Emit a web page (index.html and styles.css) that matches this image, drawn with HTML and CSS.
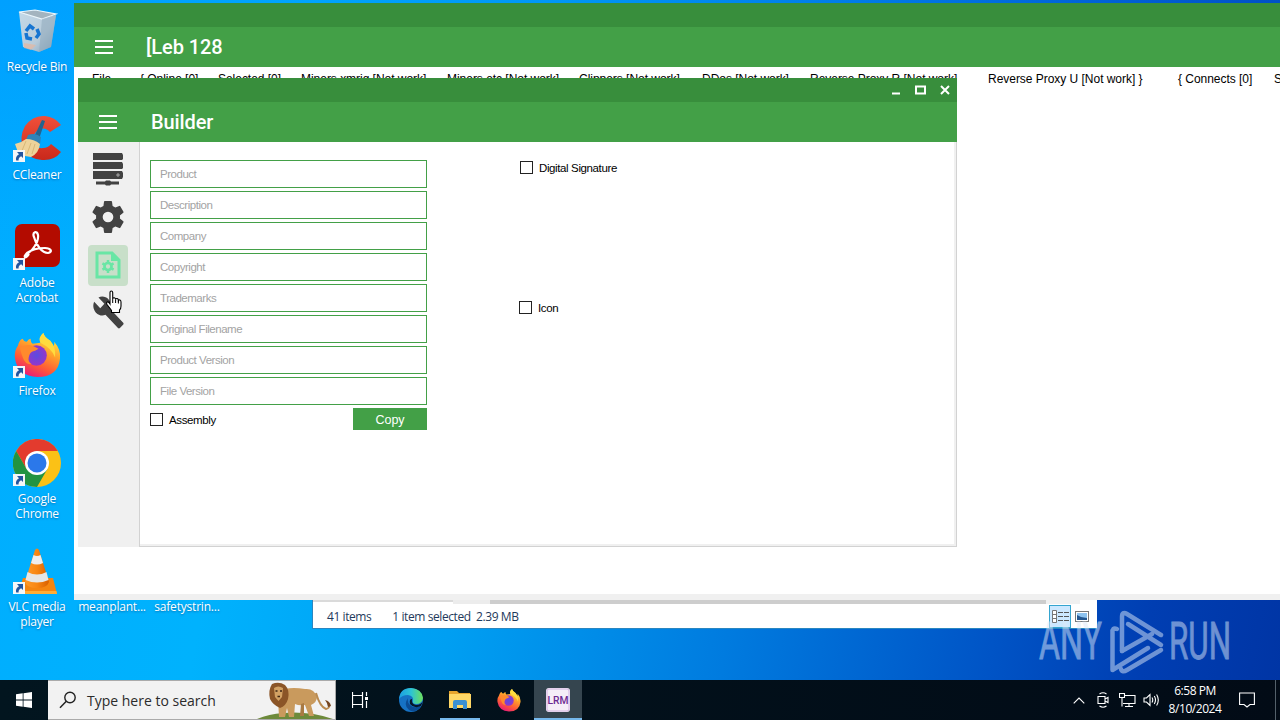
FILE: index.html
```
<!DOCTYPE html>
<html lang="en">
<head>
  <meta charset="UTF-8" />
  <meta name="viewport" content="width=device-width, initial-scale=1.0" />
  <title>Desktop</title>
  <link rel="stylesheet" href="styles.css">
</head>
<body>
  <!-- Shared icons -->
  <svg class="defs" width="0" height="0">
    <defs>
      <linearGradient id="fox-body" x1="0.8" y1="0" x2="0.3" y2="1">
        <stop offset="0" stop-color="#fff44f" />
        <stop offset="0.4" stop-color="#ffa12b" />
        <stop offset="0.7" stop-color="#ff5b36" />
        <stop offset="1" stop-color="#e8187c" />
      </linearGradient>
      <radialGradient id="fox-globe">
        <stop offset="0" stop-color="#5b4be0" />
        <stop offset="1" stop-color="#9436c9" />
      </radialGradient>
      <linearGradient id="bin-side" x1="0" y1="0" x2="1" y2="1">
        <stop offset="0" stop-color="#c3d9e8" />
        <stop offset="0.6" stop-color="#b8cbd9" />
        <stop offset="1" stop-color="#7d9cb5" />
      </linearGradient>
      <linearGradient id="cc-red" x1="0" y1="0" x2="0" y2="1">
        <stop offset="0" stop-color="#f0503a" />
        <stop offset="1" stop-color="#c9281b" />
      </linearGradient>
      <linearGradient id="cone" x1="0" y1="0" x2="1" y2="0">
        <stop offset="0" stop-color="#ff9a2a" />
        <stop offset="0.5" stop-color="#f88612" />
        <stop offset="1" stop-color="#d85f00" />
      </linearGradient>
      <linearGradient id="edge-top" x1="0" y1="0" x2="1" y2="0">
        <stop offset="0" stop-color="#1b9de2" />
        <stop offset="0.5" stop-color="#2cc3d5" />
        <stop offset="1" stop-color="#6fe05a" />
      </linearGradient>
    </defs>
    <symbol id="shortcut" viewBox="0 0 12 12">
      <rect width="12" height="12" fill="#f4f6f8" />
      <path d="M4 2h6v6L8.2 6.3Q5.3 7.5 5.6 10.5H3.2Q2 6.500 6 4.200z" fill="#23559f" />
    </symbol>
    <symbol id="firefox" viewBox="0 0 48 48">
      <path d="M4 15Q6 8 9 8Q10 11 13 11Q15 8 17 8Q17 12 19 13L27 12Q25 6 30 2Q31 6 37 10Q39 13 40 16Q42 14 41 11Q48 19 47 28Q45 47 24 47Q4 46 1 28Q0 20 4 15z" fill="url(#fox-body)" />
      <circle cx="23" cy="25" r="10.500" fill="url(#fox-globe)" />
      <path d="M6 17Q12 13 19 15L25 18Q22 20 19 21Q16 22 15 27Q14 31 18 34Q11 34 9 27Q7 22 6 17z" fill="#ff8a2c" />
      <path d="M27 12Q24 7 30 2Q31 7 37 10Q43 16 42 27Q39 18 27 12z" fill="#ffdc3e" />
    </symbol>
    <symbol id="menu" viewBox="0 0 18 14">
      <path d="M0 1h18M0 7h18M0 13h18" stroke="#fff" stroke-width="2" />
    </symbol>
  </svg>

  <div class="desktop">
    <div class="desktop-icons">
      <div class="desktop-item">
        <svg class="item-icon" viewBox="0 0 48 48">
          <path d="M6 5L10 40L26 45L38 40L43 8L29 11z" fill="url(#bin-side)" />
          <path d="M6 5L22 3L43 7L29 12z" fill="#a3b4bf" stroke="#eaf5fb" stroke-width="1.200" />
          <path d="M29 12L26 45L38 40L43 8z" fill="#8fa9bb" opacity=".55" />
          <path d="M13 24l4-5 4 3M24 22l2 5-3 4M19 32l-5-1-1-5" fill="none" stroke="#1675d1" stroke-width="3.500" />
          <path d="M11 36l12 2-5 5-7-2z" fill="#e6b6a0" opacity=".7" />
        </svg>
        <span>Recycle Bin</span>
      </div>
      <div class="desktop-item">
        <svg class="item-icon" viewBox="0 0 48 48">
          <path d="M48 10L37 17Q32 11 25 15Q19 20 20 27Q23 34 30 33Q35 33 38 29L48 37Q41 46 29 45Q16 44 10 34Q6 22 12 11Q20 0 32 1Q42 2 48 10z" fill="url(#cc-red)" />
          <path d="M29 5l3 1-6 18-5-2z" fill="#23648f" />
          <path d="M15 20Q22 17 28 22L27 29Q19 27 13 25z" fill="#2f83b8" />
          <path d="M13 24Q21 24 27 29Q26 38 18 42L6 40L2 29Q8 28 13 24z" fill="#eed39a" />
          <path d="M13 26L8 38M18 28L14 39M22 29L19 39" stroke="#d9b877" fill="none" />
          <use href="#shortcut" x="0" y="35" width="12" height="12" />
        </svg>
        <span>CCleaner</span>
      </div>
      <div class="desktop-item">
        <svg class="item-icon" viewBox="0 0 48 48">
          <rect x="2" y="1" width="45" height="43" rx="7" fill="#b30b00" />
          <path d="M12 32C19 29 26 19 25 12C24 7 19 9 21 14C23 22 29 30 35 30C40 29 38 25 32 25C25 25 18 27 14 30C10 34 12 37 16 31" fill="none" stroke="#fff" stroke-width="2.200" />
          <use href="#shortcut" x="0" y="35" width="12" height="12" />
        </svg>
        <span>Adobe<br>Acrobat</span>
      </div>
      <div class="desktop-item">
        <svg class="item-icon" viewBox="0 0 48 48">
          <use href="#firefox" x="1" y="0" width="47" height="47" />
          <use href="#shortcut" x="0" y="35" width="12" height="12" />
        </svg>
        <span>Firefox</span>
      </div>
      <div class="desktop-item">
        <svg class="item-icon" viewBox="0 0 48 48">
          <circle cx="24" cy="24" r="24" fill="#fbc116" />
          <path d="M24 12H44.800A24 24 0 0 0 3.200 12L13.600 30z" fill="#e33b2e" />
          <path d="M3.200 12A24 24 0 0 0 24 48L34.400 30H13.600z" fill="#229342" />
          <circle cx="24" cy="24" r="12" fill="#fff" />
          <circle cx="24" cy="24" r="9.500" fill="#2b78ea" />
          <use href="#shortcut" x="0" y="35" width="12" height="12" />
        </svg>
        <span>Google<br>Chrome</span>
      </div>
      <div class="desktop-item">
        <svg class="item-icon" viewBox="0 0 48 48">
          <path d="M10 31H40L44 47H5z" fill="#f58510" />
          <path d="M5 44H43.500L44 47H5z" fill="#ffad35" />
          <path d="M22 3Q24 0 26 3L36 35Q34 41 24 41Q14 41 12 35z" fill="url(#cone)" />
          <path d="M20.500 8Q24 10 27.500 8L30 16Q24 19 18 16z" fill="#eee" />
          <path d="M14.500 25Q24 30 33.500 25L35.500 33Q24 38 12.500 33z" fill="#e6e6e6" />
          <use href="#shortcut" x="0" y="35" width="12" height="12" />
        </svg>
        <span>VLC media<br>player</span>
      </div>
      <div class="desktop-item file-item"><span>meanplant...</span></div>
      <div class="desktop-item file-item"><span>safetystrin...</span></div>
    </div>

    <!-- Explorer, mostly covered -->
    <div class="window explorer">
      <div class="explorer-scroll">
        <div class="scroll-left"></div>
        <div class="scroll-gap"></div>
        <div class="scroll-thumb"></div>
        <div class="scroll-end"></div>
      </div>
      <div class="explorer-status">
        <span>41 items</span>
        <span>1 item selected&nbsp; 2.39 MB</span>
        <div class="view-buttons">
          <div class="view-button active">
            <svg width="17" height="13" viewBox="0 0 17 13">
              <path d="M.5.500h4v12h-4zM.5 4.500h4M.5 8.500h4" fill="#fff" stroke="#777" />
              <path d="M6 2.500h5M12 2.500h5M6 6.500h5M12 6.500h5M6 10.500h5M12 10.500h5" stroke="#555" />
            </svg>
          </div>
          <div class="view-button">
            <svg width="14" height="11" viewBox="0 0 14 11">
              <rect x=".5" y=".5" width="13" height="10" fill="#fff" stroke="#777" />
              <rect x="2" y="2" width="10" height="7" fill="#8dc3f0" />
              <path d="M2 4l4 2 6 1v2H2z" fill="#23568f" />
            </svg>
          </div>
        </div>
      </div>
    </div>

    <svg class="watermark" viewBox="0 0 194 66">
      <text x="0" y="51" textLength="63" lengthAdjust="spacingAndGlyphs">ANY</text>
      <text x="130" y="51" textLength="62" lengthAdjust="spacingAndGlyphs">RUN</text>
      <g fill="none" stroke-width="4.500" stroke-linejoin="round" stroke-linecap="round">
        <path d="M78 21Q73 19 73.500 25V62L109 40" />
        <path d="M83 43V9Q83 3 88 6L122 27" />
        <path d="M83 43L113 26M89 16L122 37" />
        <path d="M82 61Q83 65 88 62L122 42" />
      </g>
    </svg>

    <!-- Main window -->
    <div class="window main-window">
      <div class="caption"></div>
      <div class="header">
        <svg class="menu-icon"><use href="#menu" /></svg>
        <h1 class="title">[Leb 128</h1>
      </div>
      <div class="menu-bar">
        <span>File</span>
        <span>{ Online [0]</span>
        <span>Selected [0]</span>
        <span>Miners xmrig [Not work]</span>
        <span>Miners etc [Not work]</span>
        <span>Clippers [Not work]</span>
        <span>DDos [Not work]</span>
        <span>Reverse Proxy R [Not work]</span>
        <span>Reverse Proxy U [Not work] }</span>
        <span>{ Connects [0]</span>
        <span>S</span>
      </div>
    </div>

    <!-- Builder window -->
    <div class="window builder">
      <div class="caption">
        <svg width="10" height="10" viewBox="0 0 10 10"><path d="M1 8.500h8" /></svg>
        <svg width="11" height="10" viewBox="0 0 11 10"><path d="M1 1.500h9v7H1z" /></svg>
        <svg width="10" height="10" viewBox="0 0 10 10"><path d="M1 1l8 8M9 1l-8 8" /></svg>
      </div>
      <div class="header">
        <svg class="menu-icon"><use href="#menu" /></svg>
        <h1 class="title">Builder</h1>
      </div>
      <div class="builder-body">
        <div class="sidebar">
          <div class="side-button">
            <svg width="32" height="34" viewBox="0 0 32 34">
              <path d="M1 1h29l1 2v4l-1 1H1zM1 10h29l1 2v4l-1 1H1zM1 19h29l1 2v4l-1 2H1z" />
              <path d="M4 29.500h9l1-1h4l1 1h8v3h-8l-1 1h-4l-1-1H4z" />
              <path d="M24 23h4M26 21v4" stroke="#ccc" stroke-width=".7" />
            </svg>
          </div>
          <div class="side-button">
            <svg width="40" height="40" viewBox="0 0 24 24">
              <path d="M19.140 12.940c.04-.3.060-.61.060-.94s-.02-.64-.07-.94l2.030-1.580a.49.490 0 0 0 .12-.61l-1.920-3.320a.49.490 0 0 0-.59-.22l-2.390.96a7 7 0 0 0-1.620-.94L14.400 2.810a.48.480 0 0 0-.48-.41h-3.840a.47.470 0 0 0-.47.410L9.250 5.350c-.59.240-1.130.57-1.620.94l-2.390-.96a.48.480 0 0 0-.59.220L2.740 8.870a.47.470 0 0 0 .12.610l2.030 1.580a6 6 0 0 0 0 1.880l-2.030 1.580a.49.490 0 0 0-.12.610l1.920 3.320c.12.220.37.290.59.220l2.390-.96c.5.380 1.030.7 1.620.94l.36 2.540c.05.240.24.410.48.410h3.840c.24 0 .44-.17.470-.41l.36-2.540c.59-.24 1.130-.56 1.620-.94l2.390.96c.22.080.47 0 .59-.22l1.920-3.320a.47.470 0 0 0-.12-.61zM12 15.200A3.200 3.200 0 1 1 12 8.800a3.200 3.200 0 0 1 0 6.400z" />
            </svg>
          </div>
          <div class="side-button active">
            <svg width="26" height="28" viewBox="0 0 26 28">
              <path d="M2 2H17L24 9V26H2z" fill="none" stroke="#69e6a5" stroke-width="3" />
              <path d="M16 2v8h8z" fill="#69e6a5" />
              <circle cx="13" cy="15.500" r="3.500" fill="none" stroke="#69e6a5" stroke-width="2.700" />
              <path d="M13 9v3M13 19v3M7.400 12.300l2.600 1.500M16 17.200l2.600 1.500M7.400 18.700l2.600-1.500M16 13.800l2.600-1.500" stroke="#69e6a5" stroke-width="2.500" />
            </svg>
          </div>
          <div class="side-button">
            <svg width="33" height="35" viewBox="0 0 24 24" preserveAspectRatio="none">
              <path d="M22.700 19l-9.100-9.100c.9-2.300.4-5-1.500-6.900-2-2-5-2.400-7.400-1.300L9 6 6 9 1.600 4.700C.4 7.100.9 10.100 2.900 12.100c1.900 1.900 4.600 2.400 6.900 1.500l9.100 9.100c.4.400 1 .4 1.400 0l2.300-2.300c.5-.4.5-1.100.1-1.400z" />
            </svg>
          </div>
        </div>
        <div class="builder-content">
          <div class="fields">
            <input type="text" placeholder="Product" />
            <input type="text" placeholder="Description" />
            <input type="text" placeholder="Company" />
            <input type="text" placeholder="Copyright" />
            <input type="text" placeholder="Trademarks" />
            <input type="text" placeholder="Original Filename" />
            <input type="text" placeholder="Product Version" />
            <input type="text" placeholder="File Version" />
            <div class="fields-footer">
              <label class="check assembly"><i class="box"></i>Assembly</label>
              <button class="copy-btn">Copy</button>
            </div>
          </div>
          <div class="options">
            <label class="check signature"><i class="box"></i>Digital Signature</label>
            <label class="check"><i class="box"></i>Icon</label>
          </div>
        </div>
      </div>
    </div>

    <svg class="cursor" width="18" height="24" viewBox="0 0 18 24">
      <path d="M5 14V2.500Q5 1 6.300 1T7.700 2.500V9Q8 7.500 9.300 7.800T10.600 9.500Q11 8.200 12.200 8.600T13.400 10.500Q14 9.500 15 10T16 12V16Q16 19 14.500 20V22.500H6.500V20.500L2 14.500Q1 12.500 2.300 12T5 14z" fill="#fff" stroke="#000" stroke-width="1.100" />
      <path d="M7.700 9v4M10.600 9.500v3.500M13.400 10.500v3" stroke="#000" />
    </svg>
  </div>

  <div class="taskbar">
    <div class="start">
      <svg width="16" height="16" viewBox="0 0 16 16">
        <path d="M0 2.300L6.700 1.300V7.600H0zM7.500 1.200L16 0V7.600H7.500zM0 8.400H6.700V14.700L0 13.700zM7.500 8.400H16V16L7.500 14.800z" fill="#fff" />
      </svg>
    </div>
    <div class="search">
      <svg width="18" height="18" viewBox="0 0 18 18">
        <circle cx="11" cy="6.500" r="5.200" fill="none" stroke="#222" stroke-width="1.400" />
        <path d="M7.300 10.300L1 16.800" stroke="#222" stroke-width="1.500" />
      </svg>
      <span>Type here to search</span>
      <svg class="lion" width="78" height="38" viewBox="0 0 78 38">
        <path d="M0 38Q12 33 26 32Q52 30 76 38z" fill="#6d8a3b" />
        <path d="M28 8Q36 6 48 8Q57 7 60 16Q60 21 54 24L57 35H52L48 24Q42 25 38 23L37 36H32L30 27L28 36H22L21 18z" fill="#c99a5d" />
        <path d="M47 22L47 35H43L44 23z" fill="#a97a43" />
        <path d="M59 12Q63 26 69 28Q73 27 72 24" fill="none" stroke="#b98a50" stroke-width="2" />
        <path d="M71 26Q70 21 68 19Q73 20 74 25z" fill="#75451f" />
        <path d="M15 3Q22 0 28 4Q33 9 31 18Q29 25 23 27Q16 24 13 18Q11 9 15 3z" fill="#8b5527" />
        <path d="M17 7Q21 4 26 7L25 16L21.500 20L18 16z" fill="#d3a264" />
        <path d="M18.500 10h2M23 10h2M20.500 15.500h2.500" stroke="#3c2412" stroke-width="1.300" />
      </svg>
    </div>
    <div class="task task-view">
      <svg width="16" height="18" viewBox="0 0 16 18">
        <path d="M.5 1v3.500h10V1M.5 17v-3.500h10V17M.5 5v8M10.500 5v8M14.500 1v4M14.500 10v7" fill="none" stroke="#fff" stroke-width="1.200" />
        <path d="M13 6h3v3h-3z" fill="#fff" />
      </svg>
    </div>
    <div class="task edge">
      <svg width="24" height="24" viewBox="0 0 24 24">
        <circle cx="12" cy="12" r="12" fill="#1672c4" />
        <path d="M0 11Q1 0 12 0Q23 1 24 10Q23 16 17 16Q13 16 14 13Q15 8 9 7Q3 7 0 11z" fill="url(#edge-top)" />
        <path d="M9 10Q4 17 10 22Q15 25 20 21Q22 19 21 18Q15 21 11 17Q8 14 9 10z" fill="#0b4c94" />
        <path d="M13 11Q12 16 17 17Q22 17 24 13L22 18Q15 21 11 16Q10 11 13 11z" fill="#06162a" />
      </svg>
    </div>
    <div class="task running">
      <svg width="22" height="20" viewBox="0 0 22 20">
        <path d="M0 1h8l2 2h11v5H0z" fill="#e7a42c" />
        <path d="M0 4h22v14H0z" fill="#ffd766" />
        <path d="M4 19V12Q4 10 6 10H16Q18 10 18 12V19H14V15H8V19z" fill="#3b8fd1" />
      </svg>
    </div>
    <div class="task"><svg width="24" height="24"><use href="#firefox" /></svg></div>
    <div class="task running focused">
      <svg width="24" height="24" viewBox="0 0 24 24">
        <rect width="24" height="24" rx="3" fill="#f5eef8" />
        <rect x="1" y="1" width="22" height="22" rx="2" fill="none" stroke="#c9a3dc" stroke-width=".8" />
        <text class="lrm" x="1.500" y="16" textLength="21" lengthAdjust="spacingAndGlyphs">LRM</text>
      </svg>
    </div>
    <div class="tray">
      <svg class="chevron" width="12" height="7" viewBox="0 0 12 7"><path d="M.7 6.300L6 1l5.300 5.300" /></svg>
      <svg class="camera" width="12" height="16" viewBox="0 0 12 16"><path d="M1 4.500h7v7H1zM8 7l3-1.500v5L8 9M2.500 2Q6-.5 9.500 2M2.500 14Q6 16.500 9.500 14" /></svg>
      <svg class="network" width="17" height="15" viewBox="0 0 17 15"><path d="M6 2.500h10v8H4M10 11v2.500M6 13.500h8M.5.500h5v4h-5zM3 5v8.500" /></svg>
      <svg width="17" height="14" viewBox="0 0 17 14"><path d="M1 5h2.500L7 1.500v11L3.500 9H1zM9 4.500Q10.500 7 9 9.500M11.300 3Q13.700 7 11.300 11M13.600 1.500Q17 7 13.600 12.500" /></svg>
      <div class="clock">6:58 PM<br>8/10/2024</div>
      <svg class="action-center" width="16" height="16" viewBox="0 0 16 16"><path d="M.6 1h14.800v11.500h-4.400L8 15l-3-2.500H.6z" /></svg>
      <div class="show-desktop"></div>
    </div>
  </div>
</body>
</html>
```
FILE: styles.css
```
:root {
  --green: #43a047;
  --green-dark: #388e3c;
  --panel: #f0f0f0;
  --icon: #424242;
  --ui-font: "Liberation Sans", Arial, sans-serif;
  --system-font: "Open Sans", "Noto Sans", sans-serif;
}

* {
  box-sizing: border-box;
}

body {
  margin: 0;
  width: 1280px;
  height: 720px;
  overflow: hidden;
  display: flex;
  flex-direction: column;
  font-family: var(--ui-font);
}

svg {
  display: block;
  flex-shrink: 0;
}

.defs {
  position: absolute;
}

/* Desktop */
.desktop {
  position: relative;
  height: 680px;
  overflow: hidden;
  background: linear-gradient(to bottom, rgba(0, 130, 255, 0.3), rgba(0, 130, 255, 0) 40%),
    linear-gradient(100deg, #00adff 0%, #00b2fd 22%, #009ff2 40%, #007bdf 60%, #0054c6 79%, #003eb2 90%, #0035a5 100%);
}

.desktop-icons {
  display: grid;
  grid-template-columns: repeat(3, 75px);
  grid-template-rows: repeat(6, 108px);
  grid-auto-flow: column;
}

.desktop-item {
  display: flex;
  flex-direction: column;
  align-items: center;
  gap: 4px;
  width: 74px;
  padding-top: 7px;
  color: #fff;
  font-family: var(--system-font);
  font-size: 12px;
  line-height: 15px;
  letter-spacing: -0.2px;
  text-align: center;
  white-space: nowrap;
  text-shadow: 0 1px 2px rgba(0, 60, 120, 0.5);
}

.item-icon {
  width: 48px;
  height: 48px;
}

.file-item {
  grid-row: 6;
  padding-top: 59px;
}

.window {
  position: absolute;
}

/* Green application windows */
.caption {
  height: 24px;
  background-color: var(--green-dark);
}

.header {
  height: 40px;
  display: flex;
  align-items: center;
  gap: 33px;
  padding-left: 21px;
  background-color: var(--green);
}

.menu-icon {
  width: 18px;
  height: 14px;
}

.title {
  margin: 0;
  color: #fff;
  font-family: Roboto, sans-serif;
  font-size: 20px;
  font-weight: 500;
  letter-spacing: -0.1px;
}

.main-window {
  left: 74px;
  top: 3px;
  width: 1206px;
  height: 597px;
  overflow: hidden;
  background-color: #fff;
  border-bottom: 6px solid var(--panel);
}

.menu-bar {
  display: grid;
  grid-template-columns: 48px 78px 83px 146px 132px 123px 108px 178px 190px 96px 10px;
  padding: 4px 0 0 18px;
  font-size: 12px;
  line-height: 16px;
  letter-spacing: -0.03px;
  white-space: nowrap;
  color: #000;
}

/* Builder */
.builder {
  left: 78px;
  top: 78px;
  width: 879px;
  height: 469px;
  display: flex;
  flex-direction: column;
  background-color: #fff;
}

.builder .caption {
  display: flex;
  align-items: center;
  justify-content: flex-end;
  gap: 14px;
  padding-right: 7px;
}

.builder .header {
  gap: 34px;
}

.caption path {
  fill: none;
  stroke: #fff;
  stroke-width: 2;
}

.builder-body {
  flex: 1;
  display: flex;
}

.sidebar {
  width: 61px;
  display: flex;
  flex-direction: column;
  align-items: center;
  gap: 7px;
  padding: 7px 1px 0 0;
  background-color: var(--panel);
}

.side-button {
  width: 40px;
  height: 41px;
  padding-bottom: 2px;
  border-radius: 4px;
  display: flex;
  align-items: center;
  justify-content: center;
  fill: var(--icon);
}

.side-button.active {
  background-color: #c8dfc9;
}

.builder-content {
  flex: 1;
  display: flex;
  gap: 92px;
  padding: 18px 10px 0;
  border: solid #d2d2d2;
  border-width: 0 1px 1px;
  box-shadow: inset -2px -2px #f0f0f0;
}

.fields {
  width: 277px;
  display: flex;
  flex-direction: column;
  gap: 3px;
}

.fields input {
  height: 28px;
  padding: 0 9px;
  border: 1px solid var(--green);
  background-color: #fff;
  font-family: var(--ui-font);
  font-size: 11.5px;
  letter-spacing: -0.47px;
}

.fields input::placeholder {
  color: #a3a3a3;
}

.fields-footer {
  display: flex;
  justify-content: space-between;
}

.check {
  display: flex;
  align-items: center;
  gap: 6px;
  height: 16px;
  font-size: 11.5px;
  letter-spacing: -0.38px;
  color: #000;
}

.box {
  width: 13px;
  height: 13px;
  margin-bottom: 1px;
  border: 1px solid #222;
}

.assembly {
  margin-top: 4px;
}

.copy-btn {
  width: 74px;
  height: 22px;
  padding: 1px 0 0;
  border: none;
  background-color: var(--green);
  color: #fff;
  font-family: var(--ui-font);
  font-size: 12.5px;
}

.signature {
  margin: 0 0 124px 1px;
}

.cursor {
  position: absolute;
  left: 105px;
  top: 290px;
}

/* Explorer */
.explorer {
  left: 312px;
  top: 599px;
  width: 785px;
  height: 30px;
  background-color: #fff;
  border: 1px solid #2a86c0;
  border-width: 0 0 1px 1px;
}

.explorer-scroll {
  display: flex;
  height: 5px;
}

.scroll-left {
  width: 140px;
  height: 3px;
  background-color: #dadada;
}

.scroll-gap {
  width: 37px;
  background-color: #ececec;
}

.scroll-thumb {
  width: 556px;
  background-color: #cdcdcd;
}

.scroll-end {
  width: 34px;
  background-color: #f0f0f0;
}

.explorer-status {
  display: flex;
  align-items: center;
  gap: 21px;
  height: 24px;
  padding-left: 14px;
  color: #1e395b;
  font-family: var(--system-font);
  font-size: 12px;
  letter-spacing: -0.42px;
}

.view-buttons {
  display: flex;
  margin-left: auto;
  padding-right: 4px;
}

.view-button {
  width: 22px;
  height: 23px;
  display: flex;
  align-items: center;
  justify-content: center;
}

.view-button.active {
  background-color: #cce8ff;
  border: 1px solid #35a5d0;
}

.watermark {
  position: absolute;
  left: 1039px;
  top: 608px;
  width: 194px;
  height: 66px;
  overflow: visible;
  opacity: 0.5;
  fill: #dce8f8;
  stroke: #dce8f8;
}

.watermark text {
  font-family: Roboto, sans-serif;
  font-size: 52px;
  stroke-width: 0.8;
}

/* Taskbar */
.taskbar {
  display: flex;
  height: 40px;
  background: linear-gradient(to right, #02151f, #020b16);
}

.start,
.task {
  width: 48px;
  display: flex;
  align-items: center;
  justify-content: center;
}

.search {
  width: 288px;
  display: flex;
  align-items: center;
  gap: 10px;
  padding-left: 11px;
  border: 1px solid #aaa;
  border-left: none;
  background-color: #f2f2f2;
  color: #2b2b2b;
  font-family: var(--system-font);
  font-size: 14px;
  white-space: nowrap;
}

.lion {
  margin-left: auto;
}

.task {
  width: 49px;
  border-bottom: 2px solid transparent;
  padding-top: 2px;
}

.task-view {
  width: 48px;
}

.edge {
  width: 54px;
}

.task.running {
  width: 40px;
  margin: 0 4px 0 2px;
  border-bottom-color: #76b9ed;
}

.task.running.focused {
  width: 48px;
  margin: 0 0 0 1px;
  background-color: #35454f;
}

.lrm {
  fill: #6b2a91;
  font-family: Roboto, sans-serif;
  font-size: 11px;
  font-weight: 500;
}

.tray {
  margin-left: auto;
  display: flex;
  align-items: center;
  gap: 8px;
}

.tray path {
  fill: none;
  stroke: #fff;
  stroke-width: 1.1;
}

.chevron {
  margin-right: 4px;
}

.camera {
  margin-right: 2px;
}

.network {
  margin-right: -1px;
}

.clock {
  width: 54px;
  color: #fff;
  font-family: var(--system-font);
  font-size: 12px;
  line-height: 18px;
  letter-spacing: -0.45px;
  text-align: center;
}

.action-center {
  margin-left: 9px;
}

.show-desktop {
  width: 5px;
  height: 40px;
  margin-left: 12px;
  border-left: 1px solid #53606a;
}
```
